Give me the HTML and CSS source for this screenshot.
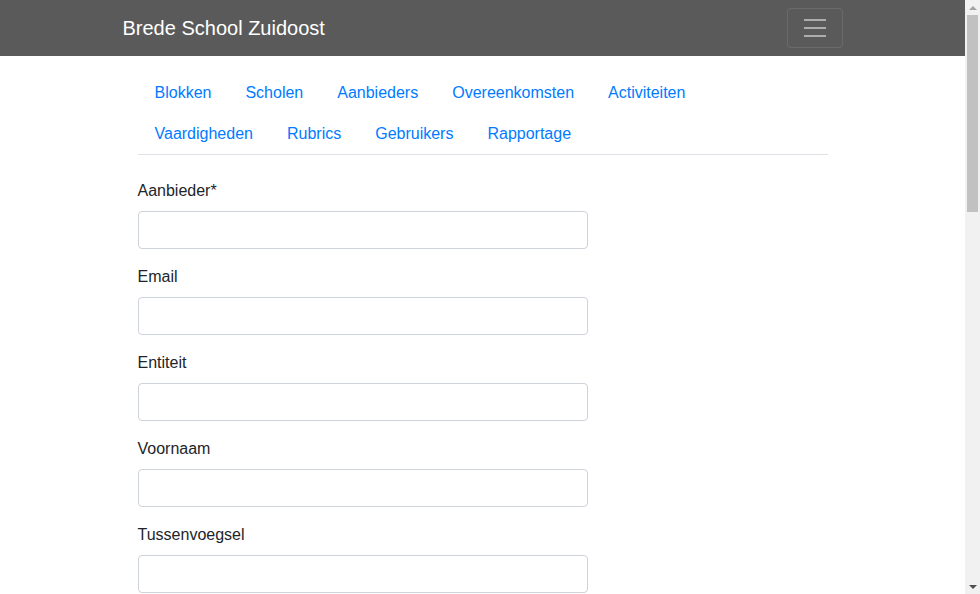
FILE: index.html
```html
<!DOCTYPE html>
<html lang="nl">
<head>
<meta charset="utf-8">
<title>Brede School Zuidoost</title>
<link rel="stylesheet" href="styles.css">
</head>
<body>
<div class="page">
  <nav class="navbar">
    <div class="container nav-inner">
      <a class="brand" href="#">Brede School Zuidoost</a>
      <button class="toggler" type="button" aria-label="Menu">
        <svg class="toggler-icon" viewBox="0 0 30 30" width="30" height="30"><path d="M4 7h22M4 15h22M4 23h22" stroke="rgba(255,255,255,0.5)" stroke-width="2" fill="none"/></svg>
      </button>
    </div>
  </nav>
  <main class="container main">
    <ul class="tabs">
      <li><a href="#">Blokken</a></li>
      <li><a href="#">Scholen</a></li>
      <li><a href="#">Aanbieders</a></li>
      <li><a href="#">Overeenkomsten</a></li>
      <li><a href="#">Activiteiten</a></li>
      <li><a href="#">Vaardigheden</a></li>
      <li><a href="#">Rubrics</a></li>
      <li><a href="#">Gebruikers</a></li>
      <li><a href="#">Rapportage</a></li>
    </ul>
    <form class="form">
      <div class="group"><label>Aanbieder*</label><input type="text"></div>
      <div class="group"><label>Email</label><input type="text"></div>
      <div class="group"><label>Entiteit</label><input type="text"></div>
      <div class="group"><label>Voornaam</label><input type="text"></div>
      <div class="group last"><label>Tussenvoegsel</label><input type="text"></div>
    </form>
  </main>
</div>
<div class="scrollbar" aria-hidden="true">
  <div class="sb-arrow sb-up"></div>
  <div class="sb-track"><div class="sb-thumb"></div></div>
  <div class="sb-arrow sb-down"></div>
</div>
</body>
</html>
```
FILE: styles.css
```css
* { box-sizing: border-box; }
html, body { margin: 0; padding: 0; }
html, body { height: 594px; overflow: hidden; }
body {
  font-family: "Liberation Sans", Arial, sans-serif;
  font-size: 16px;
  line-height: 1.5;
  color: #212529;
  background: #fff;
}
.page {
  width: 965px;
}
.container {
  width: 100%;
  max-width: 720px;
  margin: 0 auto;
}
.navbar {
  background: #5a5a5a;
  padding: 8px 0;
}
.nav-inner {
  display: flex;
  align-items: center;
  justify-content: space-between;
}
.brand {
  color: #fff;
  text-decoration: none;
  font-size: 20px;
  line-height: 30px;
  padding: 5px 0;
}
.toggler {
  background: transparent;
  border: 1px solid rgba(255,255,255,0.1);
  border-radius: 4px;
  padding: 4px 12px;
  height: 40px;
  width: 56px;
  display: flex;
  align-items: center;
  justify-content: center;
}
.toggler-icon { display: block; }
.main {
  padding: 16px 15px 0;
}
.tabs {
  list-style: none;
  margin: 0;
  padding: 0;
  display: flex;
  flex-wrap: wrap;
  border-bottom: 1px solid #dee2e6;
}
.tabs li { margin-bottom: -1px; }
.tabs a {
  display: block;
  padding: 8px 16px;
  border: 1px solid transparent;
  color: #007bff;
  text-decoration: none;
}
.form {
  padding-top: 24px;
  width: 450px;
}
.group { margin-bottom: 16px; }
.group.last { margin-bottom: 0; }
.group label {
  display: inline-block;
  margin-bottom: 8px;
}
.group input {
  display: block;
  width: 100%;
  height: 38px;
  padding: 6px 12px;
  font: inherit;
  border: 1px solid #ced4da;
  border-radius: 4px;
  background: #fff;
}
.scrollbar {
  position: fixed;
  top: 0;
  right: 0;
  width: 15px;
  height: 594px;
  background: #f1f1f1;
  display: flex;
  flex-direction: column;
}
.sb-arrow {
  height: 15px;
  display: flex;
  align-items: center;
  justify-content: center;
}
.sb-up::before, .sb-down::before {
  content: "";
  width: 0;
  height: 0;
  border-left: 4px solid transparent;
  border-right: 4px solid transparent;
}
.sb-up::before { border-bottom: 4px solid #a3a3a3; }
.sb-down::before { border-top: 4px solid #505050; }
.sb-track {
  flex: 1;
  padding: 0 2px;
}
.sb-thumb {
  height: 197px;
  background: #c1c1c1;
}
```
